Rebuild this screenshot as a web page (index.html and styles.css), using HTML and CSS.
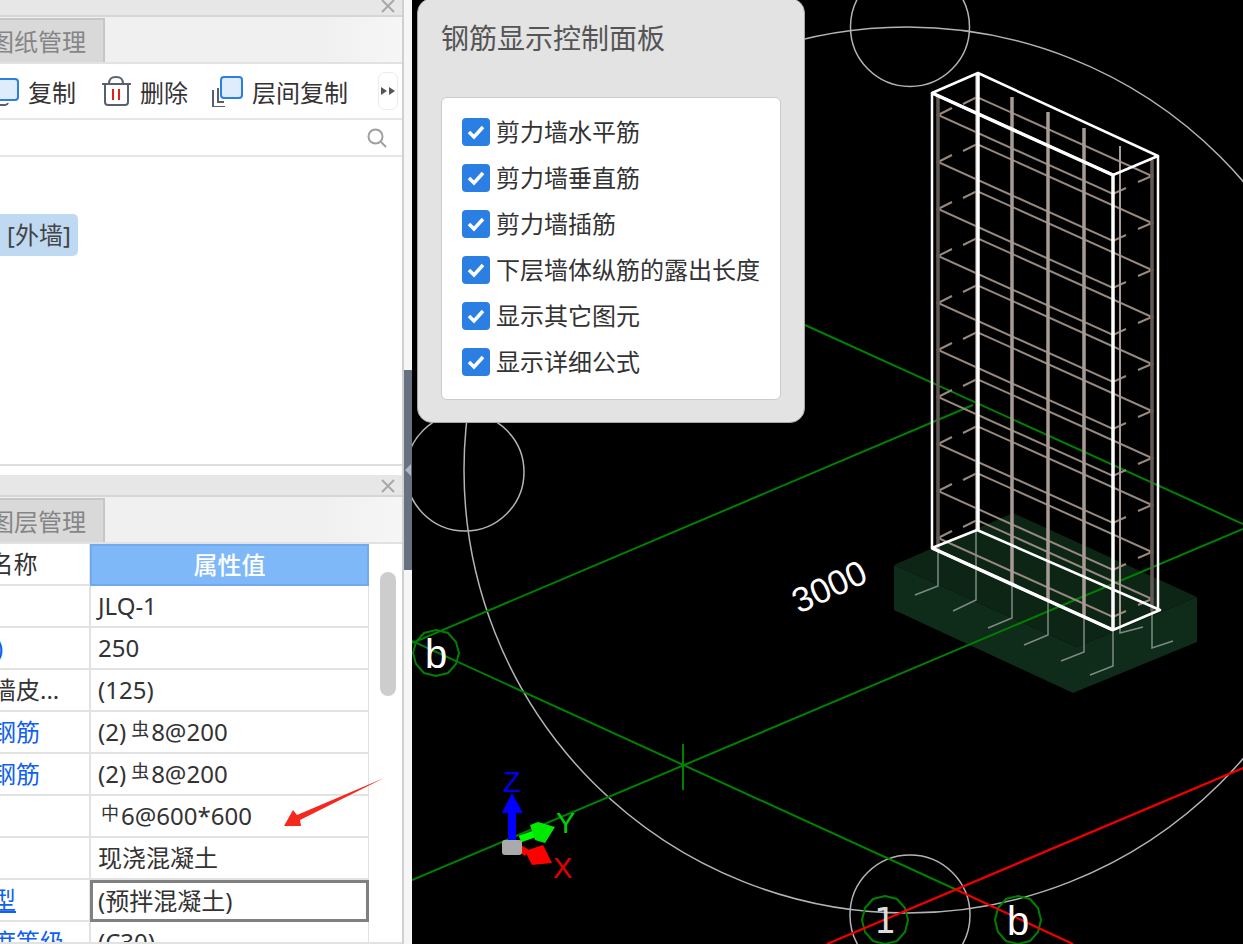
FILE: index.html
```html
<!DOCTYPE html>
<html lang="zh">
<head>
<meta charset="utf-8">
<title>钢筋显示控制面板</title>
<link rel="stylesheet" href="styles.css">
</head>
<body>
<div class="app">
  <aside class="side">
    <section class="panel panel-top">
      <div class="head head-cut">
        <svg class="close" viewBox="0 0 14 14"><path d="M1 1l12 12M13 1L1 13"/></svg>
      </div>
      <div class="tabs"><div class="tab">图纸管理</div></div>
      <div class="toolbar">
        <div class="tool">
          <svg class="ico" viewBox="0 0 31 31"><path class="back" d="M1 14v15h16a3 3 0 0 0 3-2"/><rect class="front" x="8" y="3" width="22" height="21" rx="3"/></svg>
          <span>复制</span>
        </div>
        <div class="tool">
          <svg class="ico" viewBox="0 0 31 31"><path class="back" d="M5 8v18a3 3 0 0 0 3 3h17a3 3 0 0 0 3-3V8M2 8h29M9 8c0-6 3-7 7-7s7 1 7 7"/><path class="red" d="M13 13v11M19 13v11"/></svg>
          <span>删除</span>
        </div>
        <div class="tool">
          <svg class="ico" viewBox="0 0 31 31"><path class="back" d="M1 14v17h12M6 12v14h6"/><rect class="front" x="9" y="1" width="21" height="21" rx="3"/></svg>
          <span>层间复制</span>
        </div>
        <div class="more">
          <svg viewBox="0 0 14 8"><path d="M0 0l6 4-6 4zM8 0l6 4-6 4z"/></svg>
        </div>
      </div>
      <div class="search">
        <svg class="mag" viewBox="0 0 20 20"><circle cx="8.500" cy="8.500" r="7"/><path d="M14 14l5 5"/></svg>
      </div>
      <div class="tree"><span class="chip">[外墙]</span></div>
    </section>

    <section class="panel panel-bottom">
      <div class="head">
        <svg class="close" viewBox="0 0 14 14"><path d="M1 1l12 12M13 1L1 13"/></svg>
      </div>
      <div class="tabs"><div class="tab">图层管理</div></div>
      <div class="table-wrap">
        <div class="grid">
          <div class="cell name hd">属性名称</div><div class="cell val hd-val">属性值</div>
          <div class="cell name">名称</div><div class="cell val">JLQ-1</div>
          <div class="cell name link">厚度(mm)</div><div class="cell val">250</div>
          <div class="cell name">轴线距左墙皮...</div><div class="cell val">(125)</div>
          <div class="cell name link">水平分布钢筋</div><div class="cell val">(2)<span class="sym">虫</span>8@200</div>
          <div class="cell name link">垂直分布钢筋</div><div class="cell val">(2)<span class="sym">虫</span>8@200</div>
          <div class="cell name">拉筋</div><div class="cell val"><span class="sym sym-lead">中</span>6@600*600</div>
          <div class="cell name">材质</div><div class="cell val">现浇混凝土</div>
          <div class="cell name link under">混凝土类型</div><div class="cell val active">(预拌混凝土)</div>
          <div class="cell name link">混凝土强度等级</div><div class="cell val">(C30)</div>
        </div>
        <div class="track"><div class="thumb"></div></div>
      </div>
    </section>

    <svg class="arrow" viewBox="280 775 108 54"><path d="M384 778L297 815 293 810 284 826 301 826 300 820Z"/></svg>
  </aside>

  <div class="splitter">
    <div class="split-bar"><svg viewBox="0 0 6 12"><path d="M6 0v12L0 6z"/></svg></div>
  </div>

  <main class="canvas">
    <svg class="scene" viewBox="412 0 831 944">
      <g class="gray">
        <circle cx="907" cy="470" r="443"/>
        <circle cx="910" cy="27" r="59.500"/>
        <circle cx="465" cy="472" r="59"/>
        <circle cx="910" cy="915" r="60"/>
      </g>

      <polygon class="f-side" points="894,565 1077,647 1197,597 1197,642 1073,693 894,610"/>
      <polygon class="f-top" points="894,565 1013,513 1197,597 1077,647"/>

      <g class="green">
        <path d="M412 643L973 405"/>
        <path d="M805 325L1243 524"/>
        <path d="M412 641L957 890"/>
        <path d="M412 880L1243 529"/>
        <path d="M683 744V790"/>
        <polygon points="436,630 448,633 456,642 459,653 456,664 448,673 436,676 424,673 416,664 413,653 416,642 424,633"/>
        <polygon points="885,896 897,899 905,908 908,920 905,932 897,941 885,944 873,941 865,932 862,920 865,908 873,899"/>
        <polygon points="1018,896 1030,899 1038,908 1041,920 1038,932 1030,941 1018,944 1006,941 998,932 995,920 998,908 1006,899"/>
      </g>
      <g class="redline">
        <path d="M827 944L1243 768"/>
        <path d="M957 890L1073 944"/>
      </g>

      <g class="pale">
        <path d="M938 551V586L915 595"/>
        <path d="M976 530V600L953 611"/>
        <path d="M1012 584V618L988 628"/>
        <path d="M1048 601V635L1024 645"/>
        <path d="M1084 617V652L1061 661"/>
        <path d="M1113 630V666L1090 675"/>
        <path d="M1120 625V633L1143 627"/>
        <path d="M1152 611V648L1173 641"/>
      </g>

      <path class="bar-h" d="M952 108l-14 7 175 79 13-6M952 155l-14 7 175 79 13-6M952 202l-14 7 175 79 13-6M952 249l-14 7 175 79 13-6M952 296l-14 7 175 79 13-6M952 343l-14 7 175 79 13-6M952 390l-14 7 175 79 13-6M952 437l-14 7 175 79 13-6M952 484l-14 7 175 79 13-6M952 531l-14 7 175 79 13-6"/>
      <path class="bar-h" d="M963 104l14-7 175 79-14 6M963 151l14-7 175 79-14 6M963 198l14-7 175 79-14 6M963 245l14-7 175 79-14 6M963 292l14-7 175 79-14 6M963 339l14-7 175 79-14 6M963 386l14-7 175 79-14 6M963 433l14-7 175 79-14 6M963 480l14-7 175 79-14 6M963 527l14-7 175 79-14 6"/>

      <path class="bar-dark" d="M938 95V551M1152 160V611"/>
      <path class="bar-v" d="M977 75V530M1012 97V584M1048 112V601M1084 128V617"/>
      <path class="bar-thin" d="M1120 146V625"/>

      <g class="frame">
        <path class="edge" d="M932 93L978 73 1158 156 1113 175Z"/>
        <path class="edge" d="M932 548L977 530 1160 610 1113 630Z"/>
        <path class="heavy" d="M932 93L1113 175M932 548L1113 630"/>
        <path d="M932 93V548"/>
        <path class="thick" d="M978 73V530M1113 175V630"/>
        <path d="M1158 156V610"/>
      </g>

      <text class="lbl dim" transform="translate(799 614) rotate(-25)">3000</text>
      <text class="lbl letter" x="425" y="668">b</text>
      <text class="lbl letter" x="1007" y="935">b</text>
      <text class="lbl one" x="874" y="933">1</text>

      <path class="ax-g" d="M520 839L537 833"/>
      <polygon class="fill-g" points="530,825 538,822 555,827 545,843 535,840"/>
      <path class="ax-r" d="M516 846L527 853"/>
      <polygon class="fill-r" points="525,851 543,845 552,863 532,865"/>
      <rect class="cube" x="502" y="840" width="20" height="15" rx="3"/>
      <path class="ax-b" d="M512 812V840"/>
      <polygon class="fill-b" points="512,793 523,813 502,813"/>
      <text class="ax-t t-z" x="503" y="792">Z</text>
      <text class="ax-t t-y" x="556" y="833">Y</text>
      <text class="ax-t t-x" x="553" y="878">X</text>
    </svg>

    <div class="control">
      <h2 class="control-title">钢筋显示控制面板</h2>
      <div class="control-box">
        <label class="check"><svg class="box" viewBox="0 0 28 28"><rect width="28" height="28" rx="4"/><path d="M7 14l5 5 9-10"/></svg>剪力墙水平筋</label>
        <label class="check"><svg class="box" viewBox="0 0 28 28"><rect width="28" height="28" rx="4"/><path d="M7 14l5 5 9-10"/></svg>剪力墙垂直筋</label>
        <label class="check"><svg class="box" viewBox="0 0 28 28"><rect width="28" height="28" rx="4"/><path d="M7 14l5 5 9-10"/></svg>剪力墙插筋</label>
        <label class="check"><svg class="box" viewBox="0 0 28 28"><rect width="28" height="28" rx="4"/><path d="M7 14l5 5 9-10"/></svg>下层墙体纵筋的露出长度</label>
        <label class="check"><svg class="box" viewBox="0 0 28 28"><rect width="28" height="28" rx="4"/><path d="M7 14l5 5 9-10"/></svg>显示其它图元</label>
        <label class="check"><svg class="box" viewBox="0 0 28 28"><rect width="28" height="28" rx="4"/><path d="M7 14l5 5 9-10"/></svg>显示详细公式</label>
      </div>
    </div>
  </main>
</div>
</body>
</html>
```
FILE: styles.css
```css
* { box-sizing: border-box; }
html, body { margin: 0; height: 100%; }
body {
  font-family: "Noto Sans", "Noto Sans CJK SC", sans-serif;
  font-size: 24px;
  color: #333;
  background: #000;
  overflow: hidden;
}
.app { display: flex; height: 944px; overflow: hidden; }

/* left column */
.side {
  position: relative;
  width: 404px;
  flex: none;
  display: flex;
  flex-direction: column;
  background: #fff;
  border-right: 2px solid #d0d0d0;
  overflow: hidden;
}
.panel { display: flex; flex-direction: column; }
.panel-top { height: 466px; border-bottom: 2px solid #dedede; flex: none; }
.panel-bottom { margin-top: 9px; flex: 1; min-height: 0; border-bottom: 2px solid #e2e2e2; }

.head {
  height: 22px;
  flex: none;
  display: flex;
  align-items: center;
  justify-content: flex-end;
  padding: 2px 7px 0 0;
  background: #e7e7e7;
  border-bottom: 2px solid #d6d6d6;
}
.head-cut { margin-top: -5px; }
.close { width: 14px; height: 14px; }
.close path { stroke: #a8a8a8; stroke-width: 2; fill: none; }

.tabs {
  height: 47px;
  flex: none;
  display: flex;
  background: linear-gradient(90deg, #f0f0f0 80%, #f6f6f6);
  border-bottom: 2px solid #e2e2e2;
}
.tab {
  width: 113px;
  margin-left: -8px;
  margin-top: 1px;
  padding-right: 17px;
  padding-bottom: 2px;
  display: flex;
  align-items: center;
  justify-content: flex-end;
  white-space: nowrap;
  background: #d9d9d9;
  border: 2px solid #c6c6c6;
  border-bottom: 0;
  color: #858585;
}

.toolbar {
  height: 56px;
  flex: none;
  display: flex;
  align-items: center;
  gap: 24px;
  margin-left: -12px;
  border-bottom: 2px solid #e6e6e6;
}
.tool { display: flex; align-items: center; gap: 9px; flex: none; white-space: nowrap; }
.ico { width: 31px; height: 31px; flex: none; }
.ico .back { fill: none; stroke: #566070; stroke-width: 2; }
.ico .front { fill: #deecfc; stroke: #2b7fe3; stroke-width: 2; }
.ico .red { fill: none; stroke: #e02020; stroke-width: 2; }
.more {
  margin-left: auto;
  margin-right: 4px;
  width: 20px;
  height: 38px;
  display: flex;
  align-items: center;
  justify-content: center;
  border: 1px solid #ececec;
  border-radius: 7px;
}
.more svg { width: 14px; height: 8px; }
.more path { fill: #555; }

.search {
  height: 37px;
  flex: none;
  display: flex;
  align-items: center;
  justify-content: flex-end;
  padding-right: 15px;
  border-bottom: 2px solid #e6e6e6;
}
.mag { width: 20px; height: 20px; }
.mag circle, .mag path { fill: none; stroke: #a0a0a0; stroke-width: 2; }

.tree { flex: 1; padding-top: 57px; }
.chip {
  display: inline-block;
  height: 42px;
  line-height: 42px;
  margin-left: -6px;
  padding: 0 7px 0 13px;
  background: #c0d9f2;
  border-radius: 5px;
  color: #444;
}

/* property table */
.table-wrap { flex: 1; min-height: 0; display: flex; overflow: hidden; }
.grid {
  width: 479px;
  flex: none;
  margin-left: -110px;
  display: grid;
  grid-template-columns: 200px 279px;
  grid-auto-rows: 42px;
  align-content: start;
}
.cell {
  line-height: 40px;
  white-space: nowrap;
  overflow: hidden;
  border-bottom: 2px solid #e2e2e2;
  border-right: 2px solid #e2e2e2;
}
.name { padding-left: 6px; border-right-width: 1px; }
.hd { text-align: center; padding-left: 0; }
.link { color: #0f5ff0; }
.under { text-decoration: underline; }
.val { padding-left: 7px; border-left: 1px solid #e2e2e2; border-right-width: 1px; }
.hd-val {
  background: #7fb8f8;
  border: 2px solid #6fa9ee;
  color: #fff;
  text-align: center;
  padding-left: 0;
  font-weight: 500;
  line-height: 38px;
}
.active { border: 3px solid #808080; padding-left: 5px; line-height: 36px; }
.sym { font-size: 18px; line-height: 0; vertical-align: 5px; margin: 0 2px 0 5px; }
.sym-lead { margin: 0 2px 0 3px; }

.track { flex: 1; padding: 28px 6px 0 11px; }
.thumb { height: 124px; background: #cdcdcd; border-radius: 8px; }

.arrow { position: absolute; left: 280px; top: 775px; width: 108px; height: 54px; }
.arrow path { fill: #f5281e; }

/* splitter */
.splitter {
  width: 8px;
  flex: none;
  background: #f6f6f6;
  padding-top: 370px;
}
.split-bar {
  height: 200px;
  background: #667280;
  display: flex;
  align-items: center;
  padding-left: 1px;
}
.split-bar svg { width: 6px; height: 12px; }
.split-bar path { fill: #aeb6bf; }

/* drawing */
.canvas { position: relative; flex: 1; background: #000; overflow: hidden; }
.scene { display: block; width: 831px; height: 944px; }
.gray circle { fill: none; stroke: #b4b4b4; stroke-width: 1.500; }
.f-top { fill: #0d2515; }
.f-side { fill: #0f2b19; }
.green path, .green polygon { fill: none; stroke: #008000; stroke-width: 2; }
.redline path { fill: none; stroke: #f00000; stroke-width: 2.200; }
.pale path { fill: none; stroke: #7c8c80; stroke-width: 1.500; }
.bar-h { fill: none; stroke: #97897f; stroke-width: 2; }
.bar-v { fill: none; stroke: #a89a94; stroke-width: 3.500; }
.bar-dark { fill: none; stroke: #645a54; stroke-width: 3.500; }
.bar-thin { fill: none; stroke: #a89a94; stroke-width: 2; }
.frame path { fill: none; stroke: #fff; stroke-width: 2.500; stroke-linejoin: round; }
.frame .heavy { stroke-width: 3.500; }
.frame .thick { stroke-width: 3.500; }
.lbl { fill: #fff; font-family: "Liberation Sans", sans-serif; }
.dim { font-size: 35px; }
.letter { font-size: 40px; }
.one { font-family: "DejaVu Sans", sans-serif; font-size: 35px; fill: #ddd; }
.ax-g { stroke: #00ff00; stroke-width: 7; }
.fill-g { fill: #00e800; }
.ax-r { stroke: #ff0000; stroke-width: 7; }
.fill-r { fill: #ff0000; }
.ax-b { stroke: #0000ff; stroke-width: 8; }
.fill-b { fill: #0000ff; }
.cube { fill: #aaaaaa; }
.ax-t { font-family: "Liberation Sans", sans-serif; font-size: 29px; }
.t-z { fill: #0000e6; }
.t-y { fill: #00d000; }
.t-x { fill: #e00000; }

/* floating control panel */
.control {
  position: absolute;
  left: 5px;
  top: -2px;
  width: 388px;
  height: 425px;
  padding: 19px 23px 0;
  background: #e3e3e3;
  border: 1px solid #a8a8a8;
  border-radius: 15px;
}
.control-title {
  margin: 0 0 39px;
  font-size: 28px;
  line-height: 40px;
  font-weight: 400;
  color: #555;
}
.control-box {
  height: 303px;
  padding: 20px 20px 0;
  display: flex;
  flex-direction: column;
  gap: 18px;
  background: #fff;
  border: 1px solid #cbcbcb;
  border-radius: 6px;
}
.check { display: flex; align-items: center; gap: 6px; height: 28px; line-height: 28px; white-space: nowrap; }
.box { width: 28px; height: 28px; flex: none; }
.box rect { fill: #2b7fe3; }
.box path { fill: none; stroke: #fff; stroke-width: 3.500; }
```
